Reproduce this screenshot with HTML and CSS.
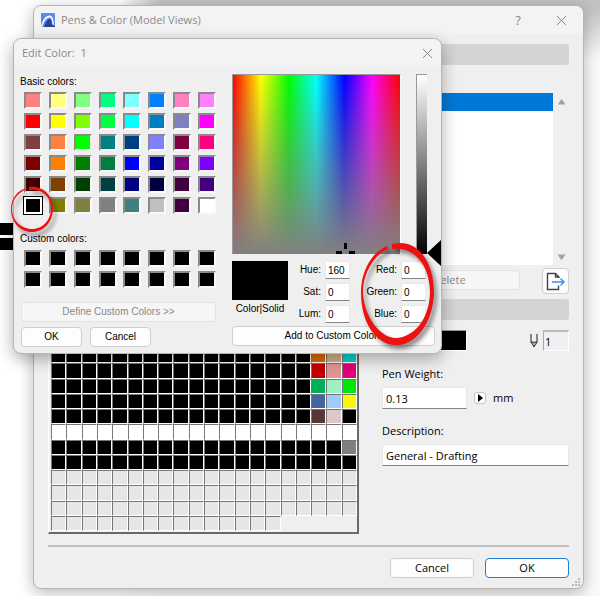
FILE: index.html
```html
<!DOCTYPE html>
<html lang="en">
<head>
  <meta charset="UTF-8">
  <meta name="viewport" content="width=device-width, initial-scale=1.0">
  <title>Pens &amp; Color (Model Views)</title>
  <link rel="stylesheet" href="styles.css">
</head>
<body>

<div class="back-lines"></div>

<main class="window">
  <header class="titlebar">
    <svg class="app-icon" viewBox="0 0 14 14">
      <rect width="14" height="14" rx="1" fill="#5b8af0"/>
      <path d="M3 14 C5 8 7 6 9 6 C10 6 10.500 8 11 12 L14 13 V14Z" fill="#2b4391"/>
      <path d="M0 13.500 C2 6 5 2.500 8.500 2.500 C11.500 2.500 12.500 6 13 12 L11.500 11 C11 7 10.500 4.500 8.500 4.500 C5.500 4.500 3 8 1.500 13.500Z" fill="#fff"/>
    </svg>
    <h1>Pens &amp; Color (Model Views)</h1>
    <button class="title-btn" aria-label="Help">?</button>
    <button class="title-btn" aria-label="Close">
      <svg width="11" height="11" viewBox="0 0 11 11"><path d="M1 1L10 10M10 1L1 10"/></svg>
    </button>
  </header>

  <div class="content">
    <div class="section-bar"></div>

    <div class="list">
      <div class="list-items"><div class="list-row selected"></div></div>
      <div class="scrollbar">
        <svg width="9" height="7" viewBox="0 0 9 7"><path d="M1 6.500L4 1.500Q4.500 1 5 1.500L8.500 6.500Z"/></svg>
        <svg width="9" height="7" viewBox="0 0 9 7"><path d="M.5 .5H8.500L5 5.500Q4.500 6 4 5.500Z"/></svg>
      </div>
    </div>

    <div class="list-actions">
      <button class="btn delete-btn" disabled>Delete</button>
      <button class="btn export-btn" aria-label="Export">
        <svg width="19" height="19" viewBox="0 0 19 19">
          <path d="M13 6V5L9.500 1.500H1.500V17.500H12.500V13.500M9.500 1.500V5H13" fill="none" stroke="#3c4650" stroke-width="1.400"/>
          <path d="M6 10H17.500M14.500 6.500L18 10L14.500 13.500" fill="none" stroke="#3d8bea" stroke-width="1.400"/>
        </svg>
      </button>
    </div>

    <div class="section-bar second"></div>

    <div class="columns">
      <div class="pen-grid" id="penGrid"></div>

      <div class="pen-details">
        <div class="pen-row">
          <button class="pen-color" aria-label="Pen color"></button>
          <label class="pen-number">
            <svg width="8" height="14" viewBox="0 0 8 14" aria-label="Pen">
              <path d="M1 0V8L4 12.500L7 8V0M1 8H3L4 9L5 8H7" fill="none" stroke="#3c4045" stroke-width="1.200"/>
              <path d="M3 11H5L4 13.500Z" fill="#3c4045"/>
            </svg>
            <input type="text" value="1">
          </label>
        </div>

        <label for="penWeight">Pen Weight:</label>
        <div class="weight-row">
          <input type="text" id="penWeight" value="0.13">
          <button class="more-btn" aria-label="More weights">
            <svg width="5" height="8" viewBox="0 0 5 8"><path d="M0 0L5 4L0 8Z"/></svg>
          </button>
          <span>mm</span>
        </div>

        <label for="description">Description:</label>
        <input type="text" id="description" value="General - Drafting">
      </div>
    </div>

    <footer class="footer">
      <button class="btn">Cancel</button>
      <button class="btn primary">OK</button>
    </footer>
  </div>

  <svg class="grip" width="8" height="8" viewBox="0 0 8 8">
    <path d="M6 0h2v2h-2zM3 3h2v2h-2zM6 3h2v2h-2zM0 6h2v2h-2zM3 6h2v2h-2zM6 6h2v2h-2z"/>
  </svg>
</main>

<section class="dialog">
  <header class="titlebar">
    <h2>Edit Color:&nbsp; 1</h2>
    <button class="title-btn" aria-label="Close">
      <svg width="11" height="11" viewBox="0 0 11 11"><path d="M1 1L10 10M10 1L1 10"/></svg>
    </button>
  </header>

  <div class="dialog-body">
    <div class="palette">
      <h3>Basic colors:</h3>
      <div class="swatches" id="basicColors"></div>
      <h3 class="custom-title">Custom colors:</h3>
      <div class="swatches" id="customColors"></div>
      <button class="btn define-btn" disabled>Define Custom Colors &gt;&gt;</button>
      <div class="dialog-actions">
        <button class="btn">OK</button>
        <button class="btn">Cancel</button>
      </div>
    </div>

    <div class="mixer">
      <div class="pickers">
        <div class="spectrum">
          <svg class="crosshair" width="19" height="11" viewBox="0 0 19 11">
            <path d="M8 0h3v6h-3zM0 8h6v3h-6zM13 8h6v3h-6z"/>
          </svg>
        </div>
        <div class="luminance"></div>
        <svg class="lum-arrow" width="14" height="26" viewBox="0 0 14 26"><path d="M0 13L14 0V26Z"/></svg>
      </div>

      <div class="values">
        <div class="preview">
          <div class="preview-color"></div>
          <span>Color|Solid</span>
        </div>
        <div class="fields">
          <label for="hue">Hue:</label><input type="text" id="hue" value="160">
          <label for="sat">Sat:</label><input type="text" id="sat" value="0">
          <label for="lum">Lum:</label><input type="text" id="lum" value="0">
        </div>
        <div class="fields rgb">
          <label for="red">Red:</label><input type="text" id="red" value="0">
          <label for="green">Green:</label><input type="text" id="green" value="0">
          <label for="blue">Blue:</label><input type="text" id="blue" value="0">
        </div>
      </div>

      <button class="btn add-btn">Add to Custom Colors</button>
    </div>
  </div>
</section>

<!-- hand drawn marks over both windows -->
<svg class="marks" width="450" height="360" viewBox="0 0 450 360">
  <path d="M29 187 C42 185 53 195 53 208 C53 222 44 232 32 232 C20 232 11 222 11 209 C11 198 18 190 27 188 L27 189 C19 192 12 199 12 209 C12 220 21 229 32 229 C43 229 51 220 51 208 C51 197 42 188 29 190Z"/>
  <path d="M392 244 C418 238 434 262 434 293 C433 325 414 347 394 345 C375 343 361 322 361 292 C361 271 372 252 387 246 L388 249 C374 255 363 273 363 292 C364 317 380 338 396 338 C414 337 429 320 430 293 C430 266 415 246 392 249Z"/>
</svg>

<script src="script.js"></script>
</body>
</html>
```
FILE: styles.css
```css
* { box-sizing: border-box; }

body {
  margin: 0;
  position: relative;
  display: flow-root;
  font-family: "Open Sans", "Noto Sans", sans-serif;
  font-size: 11px;
  line-height: 16px;
  color: #000;
  background:
    linear-gradient(to right, #fff 120px, rgba(255,255,255,0) 160px),
    linear-gradient(to bottom, #c2c2c2 0, #c2c2c2 8px, #fafafa 60px);
}

button, input {
  font: inherit;
  color: inherit;
}

button { padding: 0; }

h1, h2, h3 {
  margin: 0;
  font-size: inherit;
  font-weight: normal;
}

/* drawing lines showing left of the windows */
.back-lines {
  position: absolute;
  left: 0;
  top: 223px;
  width: 20px;
  height: 27px;
  background: linear-gradient(#000 12px, #fff 12px, #fff 15px, #000 15px);
}

.window,
.dialog {
  border: 1px solid #b5b5b5;
  border-radius: 8px;
  background: #efefef;
}

.window {
  position: relative;
  margin: 5px 16px 7px 33px;
  box-shadow: 0 4px 16px rgba(0,0,0,0.28);
}

.titlebar {
  display: flex;
  align-items: center;
  background: #f3f3f3;
  border-radius: 8px 8px 0 0;
  color: #8a8a8a;
}

.window .titlebar {
  height: 28px;
  padding: 0 15px 0 7px;
  gap: 6px;
}

.titlebar h1,
.titlebar h2 { flex: 1; }

.app-icon {
  width: 14px;
  height: 14px;
}

.title-btn {
  width: 14px;
  border: 0;
  background: none;
  line-height: 16px;
  font-size: 13px;
}

.title-btn + .title-btn { margin-left: 23px; }

.title-btn svg {
  display: block;
  margin: auto;
  fill: none;
  stroke: #8a8a8a;
}

.content { padding: 10px 14px; }

.section-bar {
  height: 21px;
  border-radius: 3px;
  background: #d4d4d4;
}

.section-bar.second { margin-top: 5px; }

.list {
  display: flex;
  height: 172px;
  margin-top: 28px;
}

.list-items {
  flex: 1;
  background: #fff;
}

.list-row { height: 18px; }
.list-row.selected { background: #0078d7; }

.scrollbar {
  width: 16px;
  padding: 5px 0 4px;
  display: flex;
  flex-direction: column;
  align-items: center;
  justify-content: space-between;
  fill: #a0a0a0;
}

.btn {
  height: 20px;
  border: 1px solid #cfcfcf;
  border-radius: 4px;
  background: #fdfdfd;
  line-height: 16px;
}

.btn:disabled {
  color: #888;
  background: #f6f6f6;
  border-color: #e2e2e2;
}

.list-actions {
  display: flex;
  justify-content: flex-end;
  gap: 22px;
  margin-top: 3px;
}

.delete-btn {
  width: 142px;
  margin-top: 2px;
}

.export-btn {
  width: 27px;
  height: 26px;
  display: flex;
  align-items: center;
  justify-content: center;
}

.columns {
  display: flex;
  gap: 23px;
  margin-top: 10px;
}

.pen-grid {
  display: grid;
  grid-template-columns: repeat(20, 1fr);
  grid-template-rows: repeat(13, 1fr);
  width: 311px;
  height: 204px;
  padding: 2px 0 1px 2px;
  border: 1px solid #fff;
  border-right: 2px solid #6a6a6a;
  border-bottom: 2px solid #6a6a6a;
}

.pen {
  border: 1px solid #fff;
  border-top-color: #777;
  border-left-color: #777;
}

.pen-details {
  flex: 1;
  display: flex;
  flex-direction: column;
}

.pen-row {
  display: flex;
  justify-content: space-between;
  margin-bottom: 15px;
}

.pen-color {
  width: 85px;
  height: 21px;
  border: 1px solid #fff;
  border-top-color: #999;
  background: #000;
}

.pen-number {
  display: flex;
  align-items: center;
  gap: 5px;
}

.pen-number input {
  width: 26px;
  height: 21px;
  padding: 0 1px;
  border: 1px solid #fff;
  border-top: 2px solid #bbb;
  border-left-color: #aaa;
  background: #f0f0f0;
}

#penWeight,
#description {
  height: 22px;
  padding: 0 3px;
  border: 1px solid #e8e8e8;
  border-bottom-color: #858585;
  background: #fff;
}

.weight-row {
  display: flex;
  align-items: center;
  gap: 7px;
  margin: 5px 0 14px;
}

#penWeight { width: 85px; }
#description { margin-top: 5px; }

.more-btn {
  width: 12px;
  height: 12px;
  border: 1px solid #c4c4c4;
  border-radius: 3px;
  background: #fff;
  display: flex;
  align-items: center;
  justify-content: center;
}

.footer {
  display: flex;
  justify-content: flex-end;
  gap: 11px;
  margin-top: 11px;
  padding-top: 11px;
  border-top: 2px solid #c0c0c0;
}

.footer .btn { width: 84px; }
.footer .primary { border-color: #1c7fd6; }

.grip {
  position: absolute;
  right: 3px;
  bottom: 2px;
  fill: #bbb;
}

/* color dialog */
.dialog {
  position: absolute;
  left: 13px;
  top: 38px;
  width: 429px;
  box-shadow: 0 5px 16px rgba(0,0,0,0.32);
  font-family: "Liberation Sans", Arial, sans-serif;
  font-size: 10px;
}

.dialog .titlebar {
  height: 28px;
  padding: 0 7px 0 8px;
  font-family: "Open Sans", "Noto Sans", sans-serif;
  font-size: 11px;
}

.dialog-body {
  display: flex;
  gap: 16px;
  padding: 7px 6px 6px;
}

.palette {
  width: 196px;
  display: flex;
  flex-direction: column;
}

.swatches {
  display: grid;
  grid-template-columns: repeat(8, 18px);
  justify-content: space-between;
  row-gap: 4px;
  padding: 0 0 0 4px;
  margin-top: 2px;
}

.swatch {
  height: 17px;
  border: 2px solid #fafafa;
  border-top-color: #8a8a8a;
  border-left-color: #8a8a8a;
}

.swatch.current {
  border-color: #fff;
  outline: 1px solid #000;
}

.custom-title { margin-top: 17px; }

.palette .custom-title + .swatches { margin-top: 3px; }

.define-btn {
  margin-top: 14px;
  margin-left: 1px;
}

.dialog-actions {
  display: flex;
  gap: 8px;
  margin-top: 5px;
  margin-left: 1px;
}

.dialog-actions .btn { width: 61px; }

.mixer { flex: 1; }

.pickers {
  display: flex;
  align-items: flex-start;
  gap: 15px;
}

.spectrum {
  position: relative;
  width: 169px;
  height: 180px;
  border: 1px solid #999;
  border-bottom: 0;
  border-right-color: #fff;
  background:
    linear-gradient(to bottom, rgba(128,128,128,0), #808080),
    linear-gradient(to right, #f00, #ff0, #0f0, #0ff, #00f, #f0f, #f00);
}

.crosshair {
  position: absolute;
  left: 103px;
  bottom: 0;
}

.luminance {
  width: 11px;
  height: 180px;
  border-left: 1px solid #999;
  border-top: 1px solid #999;
  background: linear-gradient(#fff, #000);
}

.lum-arrow {
  position: absolute;
  right: 0;
  top: 201px;
}

.values {
  display: flex;
  margin-top: 7px;
}

.preview {
  width: 56px;
  text-align: center;
}

.preview-color {
  height: 39px;
  margin-bottom: 1px;
  background: #000;
}

.fields {
  display: grid;
  grid-template-columns: 33px 25px;
  column-gap: 4px;
  row-gap: 4px;
  align-items: center;
  text-align: right;
}

.rgb { margin-left: 14px; }

.fields input {
  width: 25px;
  height: 18px;
  padding: 0 2px;
  border: 1px solid #e8e8e8;
  border-bottom-color: #858585;
  background: #fff;
}

.add-btn {
  display: block;
  width: 100%;
  margin-top: 3px;
}

.marks {
  position: absolute;
  left: 0;
  top: 0;
  fill: #ee1111;
  filter: drop-shadow(3px 4px 2px rgba(0,0,0,0.45));
  pointer-events: none;
}
```
FILE: script.js
```js
const basic = [
  '#ff8080', '#ffff80', '#80ff80', '#00ff80', '#80ffff', '#0080ff', '#ff80c0', '#ff80ff',
  '#ff0000', '#ffff00', '#80ff00', '#00ff40', '#00ffff', '#0080c0', '#8080c0', '#ff00ff',
  '#804040', '#ff8040', '#00ff00', '#008080', '#004080', '#8080ff', '#800040', '#ff0080',
  '#800000', '#ff8000', '#008000', '#008040', '#0000ff', '#0000a0', '#800080', '#8000ff',
  '#400000', '#804000', '#004000', '#004040', '#000080', '#000040', '#400040', '#400080',
  '#000000', '#808000', '#808040', '#808080', '#408080', '#c0c0c0', '#400040', '#ffffff'
];

// pens that are not black, by index
const penColors = {
  37: '#d96b00', 38: '#d4b08c', 39: '#00d4d4',
  57: '#c40000', 58: '#e39494', 59: '#e0007a',
  77: '#00ad5b', 78: '#9df0c4', 79: '#00e800',
  97: '#4565a0', 98: '#a2caf7', 99: '#f8f800',
  117: '#573636', 118: '#dcc8c8',
  159: '#808080'
};

function addSwatch(parent, className, color, label) {
  const el = document.createElement('button');
  el.className = className;
  el.style.backgroundColor = color;
  el.setAttribute('aria-label', label);
  parent.appendChild(el);
}

const basicGrid = document.getElementById('basicColors');
basic.forEach((color, i) => {
  addSwatch(basicGrid, i === 40 ? 'swatch current' : 'swatch', color, color);
});

const customGrid = document.getElementById('customColors');
for (let i = 0; i < 16; i++) {
  addSwatch(customGrid, 'swatch', '#000', 'Custom ' + (i + 1));
}

const penGrid = document.getElementById('penGrid');
for (let i = 0; i < 255; i++) {
  let color = penColors[i] || '#000';
  if (i >= 120 && i < 140) color = '#fff';
  if (i >= 180) color = '#e6e6e6';
  addSwatch(penGrid, 'pen', color, 'Pen ' + (i + 1));
}
```
